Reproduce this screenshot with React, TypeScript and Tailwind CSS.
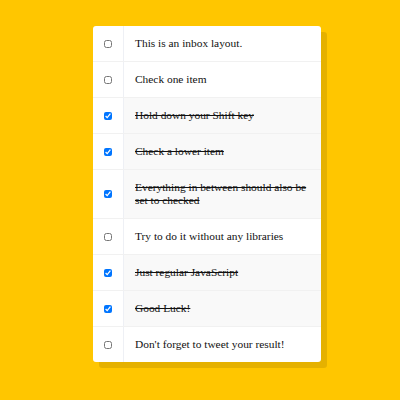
const items: { text: string; checked: boolean }[] = [
  { text: "This is an inbox layout.", checked: false },
  { text: "Check one item", checked: false },
  { text: "Hold down your Shift key", checked: true },
  { text: "Check a lower item", checked: true },
  { text: "Everything in between should also be set to checked", checked: true },
  { text: "Try to do it without any libraries", checked: false },
  { text: "Just regular JavaScript", checked: true },
  { text: "Good Luck!", checked: true },
  { text: "Don't forget to tweet your result!", checked: false },
];

const App = () => {
  return (
    <div className="min-h-screen bg-[#ffc600] pt-[26px] pl-[14px] font-serif">
      <div className="w-[228px] mx-auto bg-white rounded-[3px] shadow-[6px_6px_0_rgba(0,0,0,0.1)]">
        {items.map((item, idx) => (
          <div
            key={idx}
            className="flex items-center border-b border-[#f1f1f1] last:border-b-0"
          >
            <input
              type="checkbox"
              defaultChecked={item.checked}
              className="m-[11px] w-[8px] h-[8px] accent-[#0075ff]"
            />
            <p
              className={
                "flex-1 m-0 p-[11px] font-[family-name:Liberation_Serif] text-[11.4px] leading-[13px] text-[#111] border-l border-[#eef0f5] " +
                (item.checked ? "bg-[#f9f9f9] line-through" : "")
              }
            >
              {item.text}
            </p>
          </div>
        ))}
      </div>
    </div>
  );
};

export default App;
